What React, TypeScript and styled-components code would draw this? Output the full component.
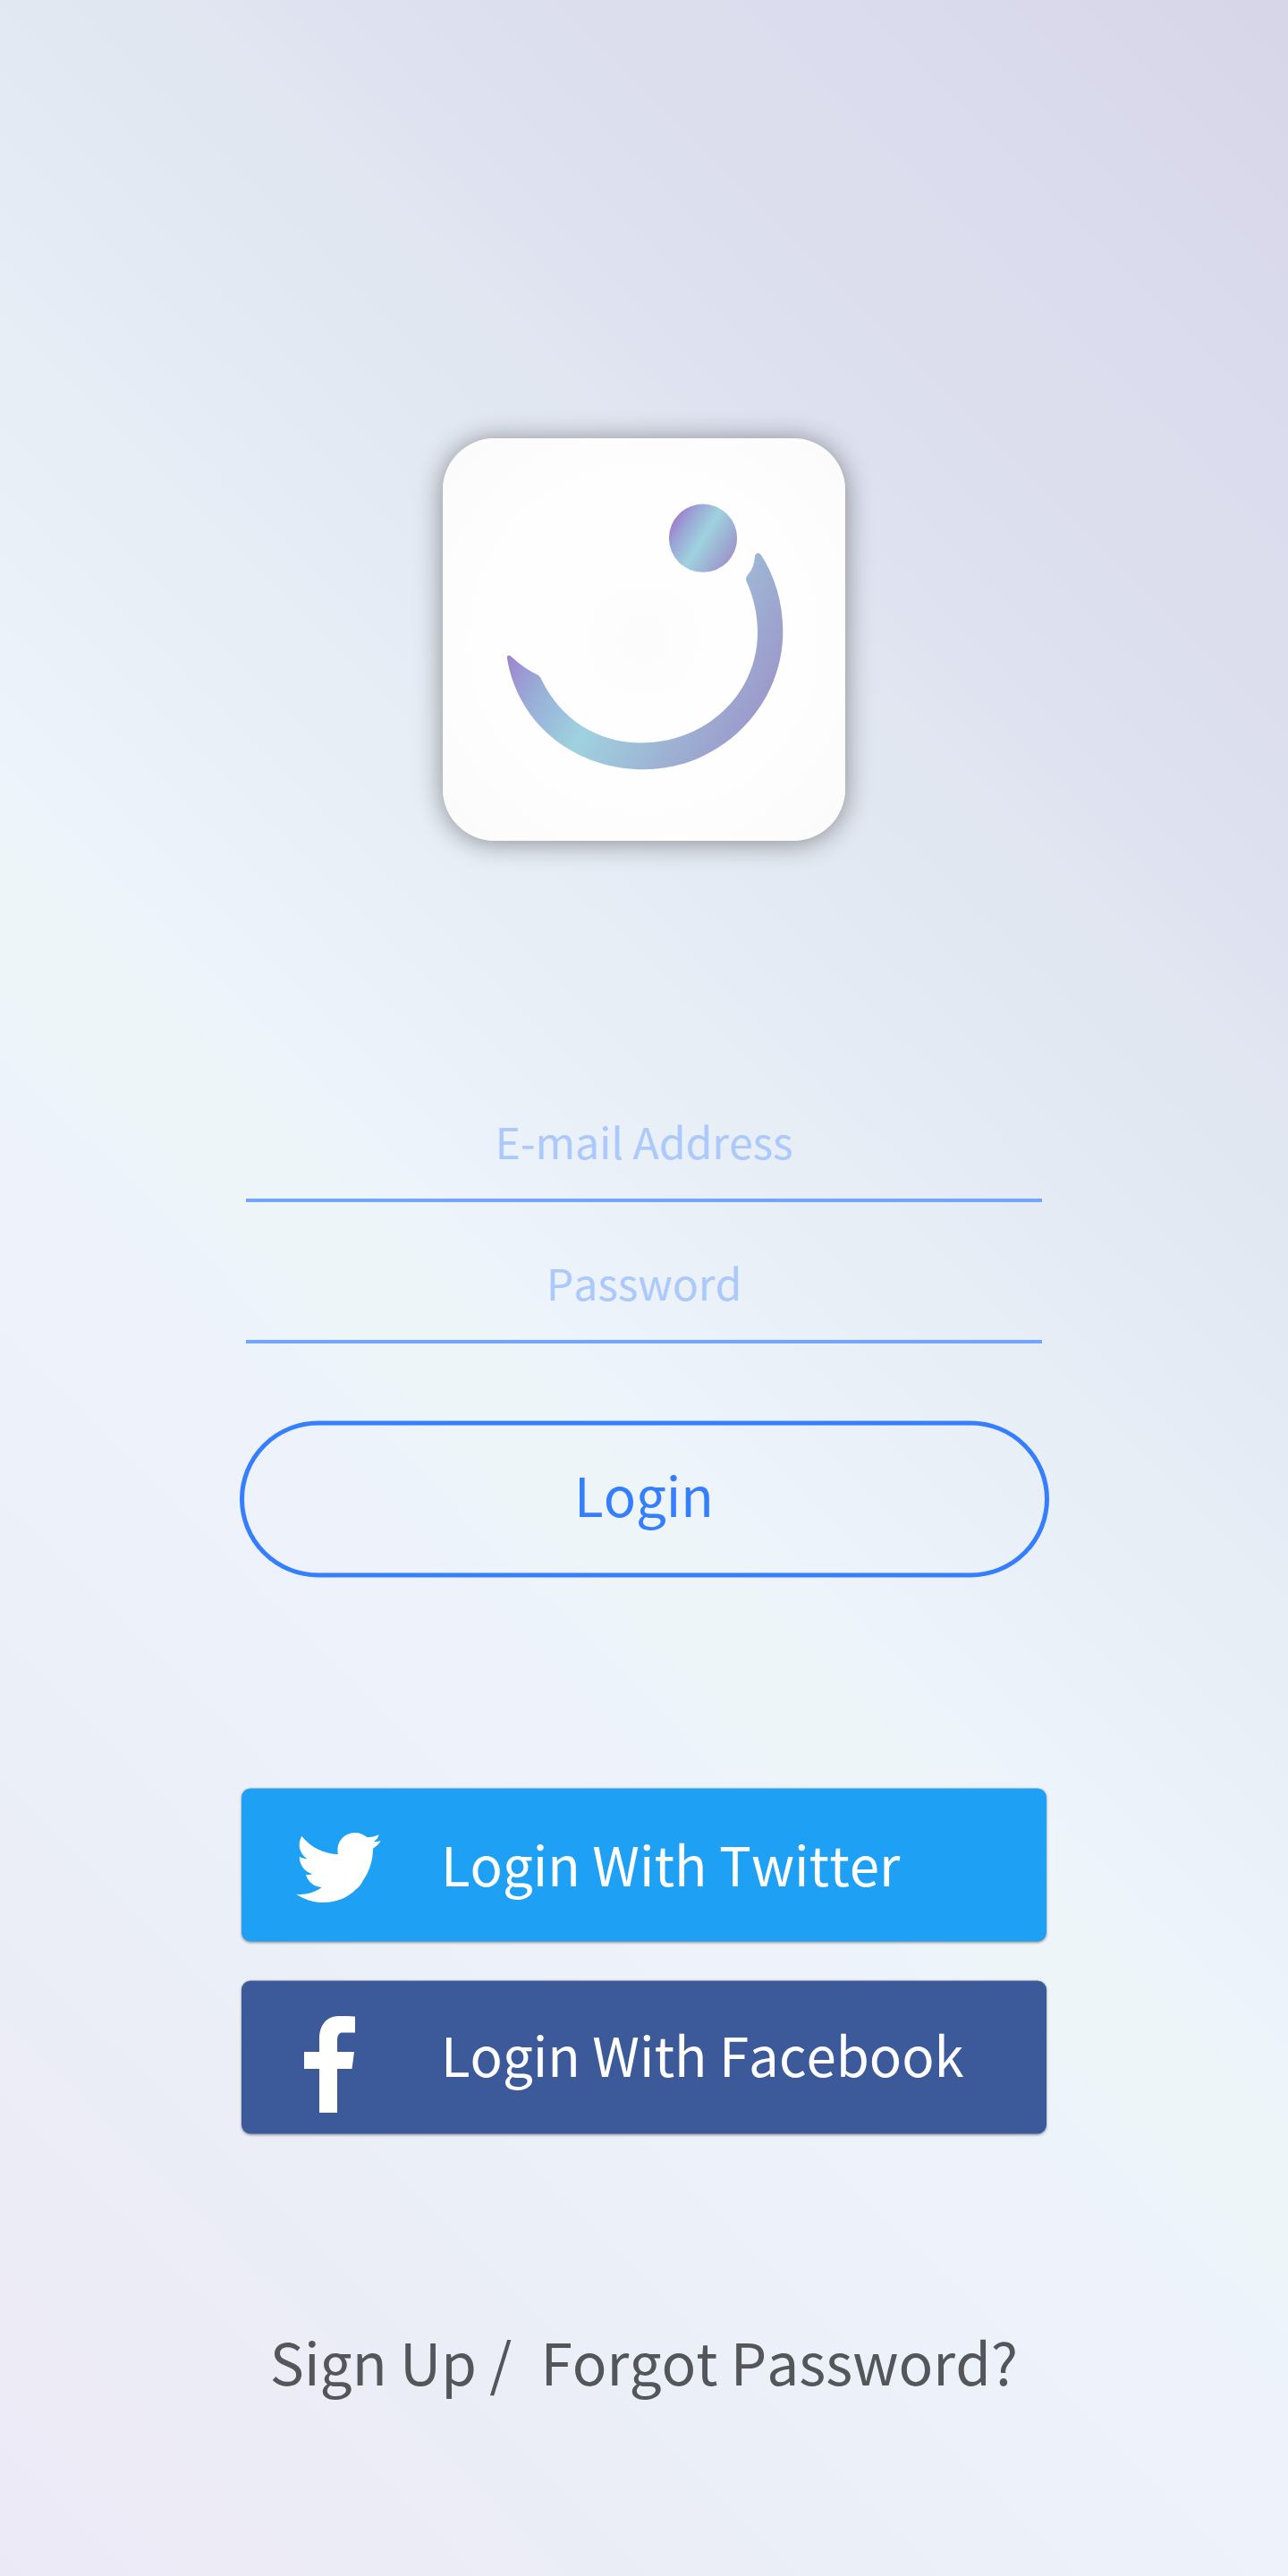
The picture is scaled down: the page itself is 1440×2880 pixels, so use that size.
import React from "react";
import styled, { createGlobalStyle } from "styled-components";

const Global = createGlobalStyle`
  * { box-sizing: border-box; }
  body { margin: 0; }
`;

const Screen = styled.main`
  width: 1440px;
  height: 2880px;
  padding-top: 490px;
  display: flex;
  flex-direction: column;
  align-items: center;
  overflow: hidden;
  font-family: "Noto Sans CJK JP", "Noto Sans CJK SC", "Noto Sans", sans-serif;
  font-kerning: none;
  background: linear-gradient(
    225deg,
    #d7d6e8 0%,
    #dadbec 10.6%,
    #dee1f0 23.8%,
    #e1e7f1 30%,
    #e4ebf4 38%,
    #e8eff7 44.6%,
    #ecf3fb 52.5%,
    #edf5f9 55%,
    #edf5f8 58.5%,
    #ecf3fb 61%,
    #edf2fb 63%,
    #ecf1fa 70%,
    #ebeff8 78%,
    #ecedf6 87%,
    #ece9f6 100%
  );
`;

const LogoTile = styled.div`
  flex: none;
  width: 450px;
  height: 450px;
  border-radius: 58px;
  background: radial-gradient(circle at 50% 50%, #fcfcfc 0%, #fefefe 25%, #fefefe 55%, #fbfbfb 100%);
  box-shadow: 0 2px 30px rgba(0, 0, 0, 0.42);
`;

const LogoMark = styled.svg`
  display: block;
  width: 450px;
  height: 450px;
`;

const Form = styled.form`
  width: 905px;
  margin-top: 280px;
  display: flex;
  flex-direction: column;
  align-items: center;
`;

const Field = styled.input`
  width: 890px;
  height: 124px;
  margin-bottom: 34px;
  padding: 0 0 10px;
  border: 0;
  border-bottom: 4px solid #73a4ff;
  border-radius: 0;
  outline: none;
  background: transparent;
  color: #347eff;
  font: 400 48px/70px "Noto Sans CJK JP", "Noto Sans CJK SC", sans-serif;
  font-kerning: none;
  text-align: center;

  &::placeholder {
    color: #abc9fb;
    opacity: 1;
  }
`;

const LoginButton = styled.button`
  position: relative;
  width: 905px;
  height: 175px;
  margin-top: 52px;
  padding: 0 0 12px;
  border: 0;
  background: transparent;
  color: #347eff;
  font: 400 60px/88px "Noto Sans CJK JP", "Noto Sans CJK SC", sans-serif;
  font-kerning: none;

  &::before {
    content: "";
    position: absolute;
    inset: 0;
    border: 5px solid #347eff;
    border-radius: 88px;
    transform: translateY(0.5px);
  }
`;

const SocialList = styled.div`
  margin-top: 236px;
  display: flex;
  flex-direction: column;
  gap: 44px;
`;

const SocialButton = styled.button<{ $color: string }>`
  position: relative;
  isolation: isolate;
  width: 900px;
  height: 171px;
  padding: 0;
  display: grid;
  grid-template-columns: 223px 1fr;
  align-items: center;
  border: 0;
  background: transparent;
  color: #fff;
  font: 400 60px/88px "Noto Sans CJK JP", "Noto Sans CJK SC", sans-serif;
  font-kerning: none;
  text-align: left;
  white-space: nowrap;

  &::before {
    content: "";
    position: absolute;
    inset: 0;
    z-index: -1;
    border-radius: 10px;
    background: ${(p) => p.$color};
    box-shadow: 0 1px 3px rgba(0, 0, 0, 0.4);
    transform: translateY(0.5px);
  }
`;

const SocialLabel = styled.span<{ $lift: number }>`
  padding-bottom: ${(p) => p.$lift}px;
`;

const TwitterIcon = styled.svg`
  width: 116px;
  height: 96px;
  margin: 7px 0 0 50px;
`;

const FacebookIcon = styled.svg`
  width: 58px;
  height: 108px;
  margin: 17px 0 0 70px;
`;

const Links = styled.nav`
  margin-top: 207px;
  font-size: 64px;
  line-height: 94px;
  color: #54565a;
  white-space: pre;
`;

const ForgotLink = styled.span`
  margin-left: 3.5px;
`;

export default function App() {
  return (
    <Screen>
      <Global />
      <LogoTile>
        <LogoMark viewBox="0 0 450 450" aria-hidden="true">
          <defs>
            <linearGradient id="dot" gradientUnits="userSpaceOnUse" x1="257" y1="90" x2="325" y2="133">
              <stop offset="0" stopColor="#9f7acc" />
              <stop offset="0.2" stopColor="#9aa6d6" />
              <stop offset="0.5" stopColor="#9fd2df" />
              <stop offset="1" stopColor="#9c94ca" />
            </linearGradient>
            <linearGradient id="smile" gradientUnits="userSpaceOnUse" x1="72" y1="246" x2="343" y2="386">
              <stop offset="0" stopColor="#9f84cd" />
              <stop offset="0.15" stopColor="#98aed8" />
              <stop offset="0.37" stopColor="#9fd2df" />
              <stop offset="0.93" stopColor="#9c98ca" />
            </linearGradient>
          </defs>
          <circle cx="291" cy="111.7" r="38.1" fill="url(#dot)" />
          <path
            d="M76 243.500 Q90 257 107 265 Q109.500 267 111 271 C131 312 171 340.500 222 340.500 C294 340.500 352 286 352 217 C352 196 347 176 339.500 160 Q338 156 341.500 152 C346 147 348.500 140 349 131 Q352 126 356 130.500 C371 154 380.300 183 380.300 216 C380.300 301 309 370.300 225 370.300 C148 370.300 84 320 72 246 Q71.500 241 76 243.500Z"
            fill="url(#smile)"
          />
        </LogoMark>
      </LogoTile>
      <Form>
        <Field type="text" placeholder="E-mail Address" />
        <Field type="text" placeholder="Password" />
        <LoginButton type="button">Login</LoginButton>
      </Form>
      <SocialList>
        <SocialButton type="button" $color="#1ea1f4">
          <TwitterIcon viewBox="0 0 348 288" aria-hidden="true">
            <path
              fill="#fff"
              d="M52 38C82 76 126 98 174 99C166 61 192 27 231 27C247 27 260 33 271 42C285 43 298 40 311 33C309 43 303 51 294 57C302 58 310 56 317 54C312 65 302 73 291 80C291 118 280 155 258 187C250 202 243 211 234 217C205 246 168 261 125 261C92 261 61 251 33 233C64 236 94 229 119 210C93 208 73 192 66 167C74 169 81 168 88 166C62 157 45 137 44 107C52 111 61 114 69 114C43 94 37 65 52 38Z"
            />
          </TwitterIcon>
          <SocialLabel $lift={4}>Login With Twitter</SocialLabel>
        </SocialButton>
        <SocialButton type="button" $color="#3c5a99">
          <FacebookIcon viewBox="0 0 58 108" aria-hidden="true">
            <path
              fill="#fff"
              d="M17 108V59H0V40H17V26C17 10 25 0.500 38 0Q48 -0.300 57 0.500V18.500H43C39 18.500 37 21 37 28V40H56L53.500 59H37V108Z"
            />
          </FacebookIcon>
          <SocialLabel $lift={8}>Login With Facebook</SocialLabel>
        </SocialButton>
      </SocialList>
      <Links>
        {"Sign Up /  "}
        <ForgotLink>Forgot Password?</ForgotLink>
      </Links>
    </Screen>
  );
}
